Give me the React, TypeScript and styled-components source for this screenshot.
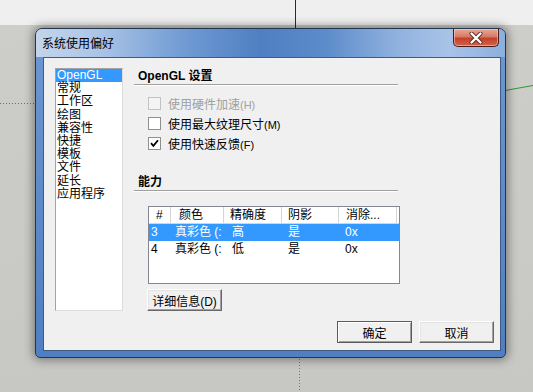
import React from "react";
import styled, { createGlobalStyle } from "styled-components";

const GlobalStyle = createGlobalStyle`
  html, body {
    margin: 0;
    padding: 0;
  }
  body {
    font-family: "Liberation Sans", "Noto Sans CJK SC", sans-serif;
    font-size: 12px;
    color: #000;
  }
`;

const Desktop = styled.div`
  position: relative;
  width: 533px;
  height: 392px;
  overflow: hidden;
  box-sizing: border-box;
  padding: 28px 0 0 35px;
  background: linear-gradient(
    to bottom,
    #efeff0 0,
    #efeff0 25px,
    #cdcdc9 25px,
    #c7c7c3 100%
  );
`;

const Axes = styled.svg`
  position: absolute;
  left: 0;
  top: 0;
`;

const Dialog = styled.div`
  position: relative;
  z-index: 1;
  width: 471px;
  height: 330px;
  box-sizing: border-box;
  border: 1px solid #23364f;
  border-radius: 7px 7px 5px 5px;
  padding: 0 4px 6px 7px;
  display: flex;
  flex-direction: column;
  background: linear-gradient(to bottom, #6e98d2 0, #5b88c8 60%, #4f7fc2 100%);
  box-shadow: 0 0 10px 2px rgba(0, 0, 0, 0.4);
`;

const TitleBar = styled.div`
  height: 28px;
  margin: 0 -4px 0 -7px;
  padding-left: 6px;
  display: flex;
  align-items: flex-start;
  border-radius: 6px 6px 0 0;
  background: linear-gradient(
    to right,
    #c4d5eb 0%,
    #a9c3e6 14%,
    #6f9ad3 32%,
    #4f7fc2 48%,
    #5d8ccb 62%,
    #93b4e0 78%,
    #a9c3e7 88%,
    #8cafdd 100%
  );
`;

const Title = styled.span`
  line-height: 28px;
  font-size: 12px;
  font-family: "Noto Sans CJK SC", sans-serif;
  color: #000;
`;

const CloseButton = styled.div`
  margin-left: auto;
  margin-right: 6px;
  width: 46px;
  height: 18px;
  box-sizing: border-box;
  border: 1px solid #4a1d18;
  border-top: none;
  border-radius: 0 0 5px 5px;
  display: flex;
  align-items: center;
  justify-content: center;
  background: linear-gradient(
    to bottom,
    #e8a896 0%,
    #d77a64 45%,
    #c3402a 55%,
    #d2644a 100%
  );
  box-shadow: inset 0 0 0 1px rgba(255, 220, 210, 0.5);
`;

const Panel = styled.div`
  width: 458px;
  height: 294px;
  box-sizing: border-box;
  border: 1px solid #3f5b82;
  background: #f0f0f0;
  padding: 10px 6px 6px 11px;
  display: flex;
  flex-direction: column;
`;

const MainRow = styled.div`
  display: flex;
  height: 243px;
`;

const ListBox = styled.div`
  width: 68px;
  height: 243px;
  box-sizing: border-box;
  background: #fff;
  border: 1px solid;
  border-color: #a3a3a3 #dcdcdc #dcdcdc #a3a3a3;
  font-family: "Liberation Sans", "Noto Sans CJK SC", sans-serif;
`;

const ListItem = styled.div<{ $selected?: boolean }>`
  height: 13.2px;
  line-height: 13.2px;
  padding-left: 1px;
  font-size: 12px;
  white-space: nowrap;
  color: ${(p) => (p.$selected ? "#fff" : "#000")};
  background: ${(p) => (p.$selected ? "#3399ff" : "transparent")};
`;

const Settings = styled.div`
  margin-left: 11px;
  width: 264px;
  display: flex;
  flex-direction: column;
`;

const Heading = styled.div<{ $top: number }>`
  margin-top: ${(p) => p.$top}px;
  height: 16px;
  line-height: 16px;
  padding-left: 4px;
  font-weight: bold;
  font-size: 12px;
  border-bottom: 1px solid #a0a0a0;
  box-shadow: 0 1px 0 #fff;
`;

const Options = styled.div`
  margin-top: 8px;
  padding-left: 14px;
`;

const OptionRow = styled.label<{ $disabled?: boolean }>`
  height: 20px;
  display: flex;
  align-items: center;
  gap: 7px;
  color: ${(p) => (p.$disabled ? "#a0a0a0" : "#000")};
  font-size: 12px;
`;

const Box = styled.span<{ $disabled?: boolean }>`
  width: 13px;
  height: 13px;
  box-sizing: border-box;
  border: 1px solid ${(p) => (p.$disabled ? "#c2c2c2" : "#8e8f8f")};
  background: ${(p) => (p.$disabled ? "#f4f4f4" : "#fff")};
  display: flex;
  align-items: center;
  justify-content: center;
`;

const Mnemonic = styled.span`
  font-size: 11px;
`;

const ListView = styled.div`
  margin: 15px 0 0 14px;
  width: 252px;
  height: 78px;
  box-sizing: border-box;
  border: 1px solid #828790;
  background: #fff;
`;

const HeaderRow = styled.div`
  display: flex;
  height: 16px;
  border-bottom: 1px solid #d5d5d5;
`;

const HeaderCell = styled.div<{ $w: number; $pad: number }>`
  width: ${(p) => p.$w}px;
  padding-left: ${(p) => p.$pad}px;
  box-sizing: border-box;
  line-height: 16px;
  font-size: 12px;
  border-right: 1px solid #d5d5d5;
  white-space: nowrap;
  overflow: hidden;
`;

const Row = styled.div<{ $selected?: boolean }>`
  display: flex;
  height: 17px;
  color: ${(p) => (p.$selected ? "#fff" : "#000")};
  background: ${(p) => (p.$selected ? "#3399ff" : "transparent")};
`;

const Cell = styled.div<{ $w: number; $pad: number }>`
  width: ${(p) => p.$w}px;
  padding-left: ${(p) => p.$pad}px;
  box-sizing: border-box;
  line-height: 17px;
  font-size: 12px;
  white-space: nowrap;
`;

const Button = styled.button<{ $default?: boolean; $w: number }>`
  width: ${(p) => p.$w}px;
  height: 22px;
  box-sizing: border-box;
  padding: 0;
  margin: 0;
  font-family: "Liberation Sans", "Noto Sans CJK SC", sans-serif;
  font-size: 12px;
  color: #000;
  background: #f0f0f0;
  border: 1px solid;
  border-color: ${(p) =>
    p.$default ? "#5a5a5a" : "#ffffff #696969 #696969 #ffffff"};
  box-shadow: ${(p) =>
    p.$default
      ? "inset 1px 1px 0 #fff, inset -1px -1px 0 #a0a0a0"
      : "inset -1px -1px 0 #a0a0a0, inset 1px 1px 0 #e3e3e3"};
`;

const DetailsButton = styled(Button)`
  margin: 5px 0 0 13px;
`;

const Footer = styled.div`
  margin-top: 10px;
  display: flex;
  justify-content: flex-end;
  gap: 7px;
`;

const columns = [
  { title: "#", w: 22, pad: 7, cellPad: 2 },
  { title: "颜色", w: 53, pad: 8, cellPad: 4 },
  { title: "精确度", w: 58, pad: 6, cellPad: 8 },
  { title: "阴影", w: 57, pad: 6, cellPad: 6 },
  { title: "消除...", w: 58, pad: 7, cellPad: 6 },
];

const rows = [
  ["3", "真彩色 (:", "高", "是", "0x"],
  ["4", "真彩色 (:", "低", "是", "0x"],
];

const categories = [
  "OpenGL",
  "常规",
  "工作区",
  "绘图",
  "兼容性",
  "快捷",
  "模板",
  "文件",
  "延长",
  "应用程序",
];

const Check = () => (
  <svg width="9" height="9" viewBox="0 0 9 9">
    <path d="M1 4.2 L3.4 6.8 L8 1.2" fill="none" stroke="#000" strokeWidth="1.8" />
  </svg>
);

const CloseX = () => (
  <svg width="14" height="12" viewBox="0 0 14 12">
    <path
      d="M2.5 1.5 L11.5 10.5 M11.5 1.5 L2.5 10.5"
      stroke="#5b2a22"
      strokeWidth="4"
      strokeLinecap="round"
    />
    <path
      d="M2.5 1.5 L11.5 10.5 M11.5 1.5 L2.5 10.5"
      stroke="#fff"
      strokeWidth="2.4"
      strokeLinecap="round"
    />
  </svg>
);

const App = (): JSX.Element => {
  return (
    <Desktop>
      <GlobalStyle />
      <Axes width="533" height="392">
        <line x1="295.5" y1="0" x2="295.5" y2="30" stroke="#1c1c9c" />
        <line x1="0" y1="103.5" x2="36" y2="103.5" stroke="#c04848" strokeDasharray="1 2" />
        <line x1="505" y1="90.5" x2="533" y2="85.5" stroke="#2e9a2e" />
        <line x1="299.5" y1="356" x2="299.5" y2="392" stroke="#7070a8" strokeDasharray="1 2" />
      </Axes>
      <Dialog>
        <TitleBar>
          <Title>系统使用偏好</Title>
          <CloseButton>
            <CloseX />
          </CloseButton>
        </TitleBar>
        <Panel>
          <MainRow>
            <ListBox>
              {categories.map((c, i) => (
                <ListItem key={c} $selected={i === 0}>
                  {c}
                </ListItem>
              ))}
            </ListBox>
            <Settings>
              <Heading $top={0}>OpenGL 设置</Heading>
              <Options>
                <OptionRow $disabled>
                  <Box $disabled />
                  <span>
                    使用硬件加速<Mnemonic>(H)</Mnemonic>
                  </span>
                </OptionRow>
                <OptionRow>
                  <Box />
                  <span>
                    使用最大纹理尺寸<Mnemonic>(M)</Mnemonic>
                  </span>
                </OptionRow>
                <OptionRow>
                  <Box>
                    <Check />
                  </Box>
                  <span>
                    使用快速反馈<Mnemonic>(F)</Mnemonic>
                  </span>
                </OptionRow>
              </Options>
              <Heading $top={21}>能力</Heading>
              <ListView>
                <HeaderRow>
                  {columns.map((c) => (
                    <HeaderCell key={c.title} $w={c.w} $pad={c.pad}>
                      {c.title}
                    </HeaderCell>
                  ))}
                </HeaderRow>
                {rows.map((r, i) => (
                  <Row key={r[0]} $selected={i === 0}>
                    {r.map((v, j) => (
                      <Cell key={j} $w={columns[j].w} $pad={columns[j].cellPad}>
                        {v}
                      </Cell>
                    ))}
                  </Row>
                ))}
              </ListView>
              <DetailsButton $w={75}>详细信息(D)</DetailsButton>
            </Settings>
          </MainRow>
          <Footer>
            <Button $default $w={75}>
              确定
            </Button>
            <Button $w={75}>取消</Button>
          </Footer>
        </Panel>
      </Dialog>
    </Desktop>
  );
};

export default App;
